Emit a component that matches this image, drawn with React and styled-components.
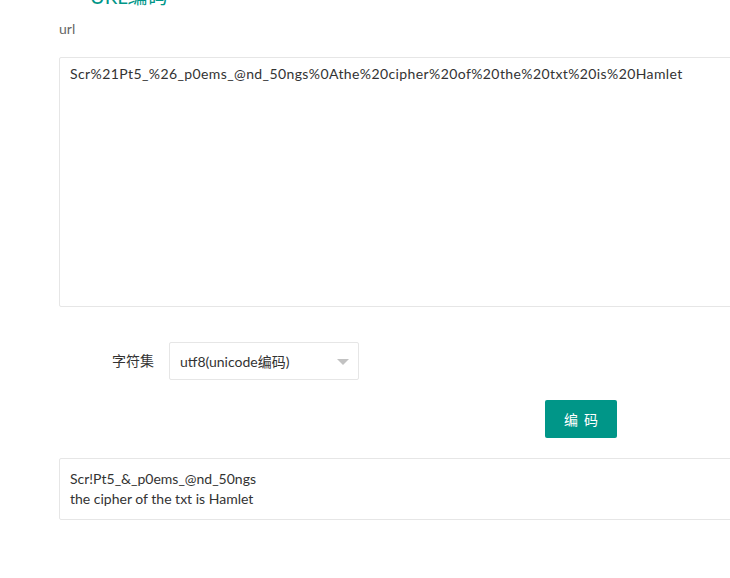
import React from "react";
import styled, { createGlobalStyle } from "styled-components";

const GlobalStyle = createGlobalStyle`
    html, body {
        margin: 0;
        padding: 0;
        background: #fff;
        overflow: hidden;
    }
    body {
        font-family: Lato, "Noto Sans CJK SC", sans-serif;
        font-size: 14px;
        color: #333;
    }
`;

const Page = styled.div`
    padding-left: 59px;
    width: 800px;
`;

const Title = styled.h2`
    margin: -14px 0 0 31px;
    font-size: 20px;
    line-height: 20px;
    font-weight: 400;
    color: #009688;
`;

const Label = styled.div`
    margin-top: 13px;
    line-height: 20px;
    color: #666;
`;

const TextBox = styled.textarea`
    display: block;
    box-sizing: border-box;
    width: 720px;
    height: ${(p) => p.$h}px;
    margin-top: ${(p) => p.$mt}px;
    padding: ${(p) => p.$pt}px 10px 6px 10px;
    border: 1px solid #e6e6e6;
    border-radius: 2px;
    font-family: Lato, "Noto Sans CJK SC", sans-serif;
    font-size: 14px;
    letter-spacing: ${(p) => p.$ls || 0}px;
    line-height: 20px;
    color: #333;
    resize: none;
    outline: none;
    overflow: hidden;
`;

const FormRow = styled.div`
    display: flex;
    align-items: center;
    margin-top: 35px;
`;

const FormLabel = styled.label`
    box-sizing: border-box;
    width: 110px;
    padding: 9px 15px;
    text-align: right;
    line-height: 20px;
    color: #333;
`;

const Select = styled.div`
    position: relative;
    box-sizing: border-box;
    width: 190px;
    height: 38px;
    padding: 0 30px 0 10px;
    border: 1px solid #e6e6e6;
    border-radius: 2px;
    display: flex;
    align-items: center;
    color: #333;
`;

const Arrow = styled.span`
    position: absolute;
    right: 9px;
    top: 16px;
    width: 0;
    height: 0;
    border-left: 6px solid transparent;
    border-right: 6px solid transparent;
    border-top: 6px solid #c2c2c2;
`;

const ButtonRow = styled.div`
    display: flex;
    padding-left: 486px;
    margin-top: 20px;
`;

const Button = styled.button`
    width: 72px;
    height: 38px;
    border: none;
    border-radius: 2px;
    background: #009688;
    color: #fff;
    font-family: "Noto Sans CJK SC", sans-serif;
    font-size: 14px;
    letter-spacing: 6px;
    padding: 0 0 0 6px;
    cursor: pointer;
`;

const encoded =
    "Scr%21Pt5_%26_p0ems_@nd_50ngs%0Athe%20cipher%20of%20the%20txt%20is%20Hamlet";
const decoded = "Scr!Pt5_&_p0ems_@nd_50ngs\nthe cipher of the txt is Hamlet";

const App = () => {
    return (
        <>
            <GlobalStyle />
            <Page>
                <Title>URL编码</Title>
                <Label>url</Label>
                <TextBox $h={250} $mt={18} $pt={6} $ls={0.4} defaultValue={encoded} />
                <FormRow>
                    <FormLabel>字符集</FormLabel>
                    <Select>
                        utf8(unicode编码)
                        <Arrow />
                    </Select>
                </FormRow>
                <ButtonRow>
                    <Button>编码</Button>
                </ButtonRow>
                <TextBox $h={62} $mt={20} $pt={10} defaultValue={decoded} />
            </Page>
        </>
    );
};

export default App;
